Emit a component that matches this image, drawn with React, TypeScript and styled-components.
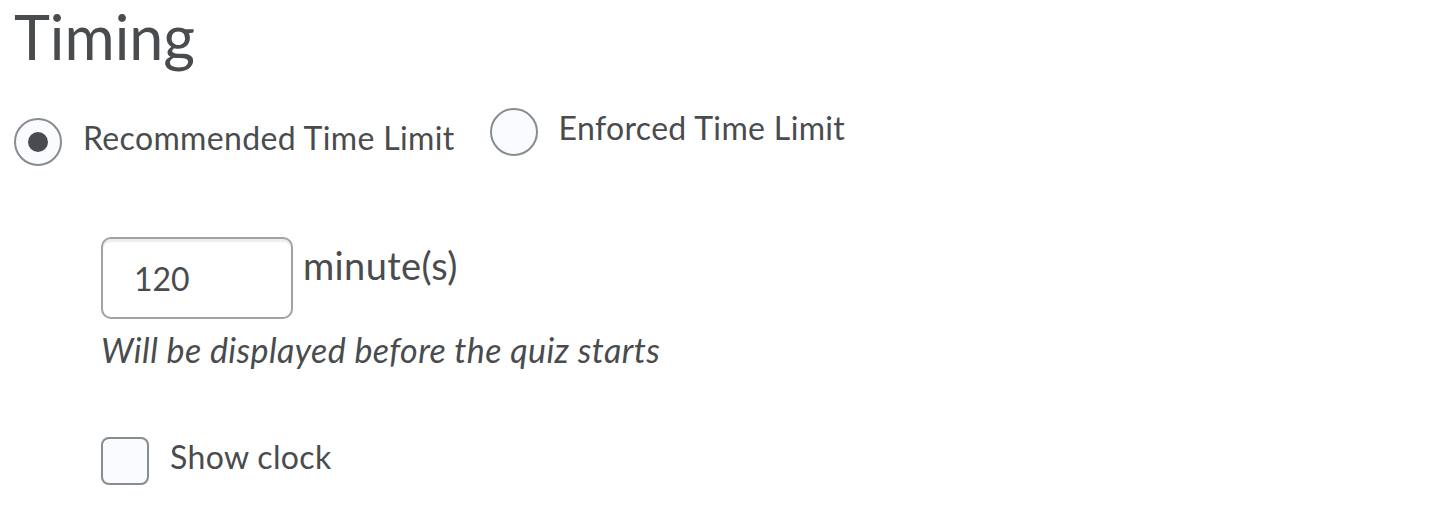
import React from 'react';
import styled, { createGlobalStyle } from 'styled-components';

const GlobalStyle = createGlobalStyle`
  html, body {
    margin: 0;
    padding: 0;
    background: #ffffff;
  }
  body {
    font-family: Lato, 'Noto Sans', sans-serif;
    color: #494c4e;
  }
`;

const Page = styled.div`
  padding: 0 0 0 14px;
  width: 1430px;
  height: 520px;
  overflow: hidden;
`;

const Heading = styled.h1`
  margin: 0;
  font-size: 61px;
  font-weight: 400;
  line-height: 1.2;
`;

const RadioRow = styled.div`
  display: flex;
  align-items: flex-start;
  gap: 35px;
  margin-top: 35px;
`;

const Option = styled.label<{ $offset?: number }>`
  display: flex;
  align-items: flex-start;
  gap: 21px;
  margin-top: ${(p) => p.$offset ?? 0}px;
  cursor: pointer;
`;

const RadioCircle = styled.span<{ $checked?: boolean }>`
  box-sizing: border-box;
  width: 48px;
  height: 48px;
  border-radius: 50%;
  border: 2px solid #868c8f;
  background: #f9fbff;
  display: flex;
  align-items: center;
  justify-content: center;
  flex-shrink: 0;

  &::after {
    content: '';
    display: ${(p) => (p.$checked ? 'block' : 'none')};
    width: 20px;
    height: 20px;
    border-radius: 50%;
    background: #494c4e;
  }
`;

const OptionText = styled.span`
  font-size: 32px;
  line-height: 1.2;
  letter-spacing: 0.35px;
  margin-top: 1px;
  white-space: nowrap;
`;

const Indented = styled.div`
  margin-left: 87px;
`;

const DurationRow = styled.div`
  display: flex;
  align-items: flex-start;
  gap: 10px;
  margin-top: 71px;
`;

const NumberInput = styled.input`
  box-sizing: border-box;
  width: 192px;
  height: 82px;
  border: 2px solid #9ea3a6;
  border-radius: 10px;
  padding: 0 0 0 31px;
  font-family: Lato, 'Noto Sans', sans-serif;
  font-size: 32px;
  color: #494c4e;
  background: #ffffff;
  box-shadow: inset 0 3px 0 0 rgba(181, 189, 194, 0.25);
  outline: none;
`;

const Unit = styled.span`
  font-size: 38px;
  line-height: 1.2;
  letter-spacing: 0.35px;
  margin-top: 6px;
`;

const HelpText = styled.p`
  margin: 11px 0 0 0;
  font-size: 34px;
  font-style: italic;
  line-height: 1.2;
  letter-spacing: 0.4px;
  white-space: nowrap;
`;

const CheckRow = styled.label`
  display: flex;
  align-items: flex-start;
  gap: 21px;
  margin-top: 66px;
  cursor: pointer;
`;

const CheckBox = styled.span`
  box-sizing: border-box;
  width: 48px;
  height: 48px;
  border: 2px solid #868c8f;
  border-radius: 8px;
  background: #f9fbff;
  flex-shrink: 0;
`;

const App: React.FC = () => {
  return (
    <Page>
      <GlobalStyle />
      <Heading>Timing</Heading>
      <RadioRow>
        <Option $offset={10}>
          <RadioCircle $checked />
          <OptionText>Recommended Time Limit</OptionText>
        </Option>
        <Option>
          <RadioCircle />
          <OptionText>Enforced Time Limit</OptionText>
        </Option>
      </RadioRow>
      <Indented>
        <DurationRow>
          <NumberInput type="text" defaultValue="120" />
          <Unit>minute(s)</Unit>
        </DurationRow>
        <HelpText>Will be displayed before the quiz starts</HelpText>
        <CheckRow>
          <CheckBox />
          <OptionText>Show clock</OptionText>
        </CheckRow>
      </Indented>
    </Page>
  );
};

export default App;
